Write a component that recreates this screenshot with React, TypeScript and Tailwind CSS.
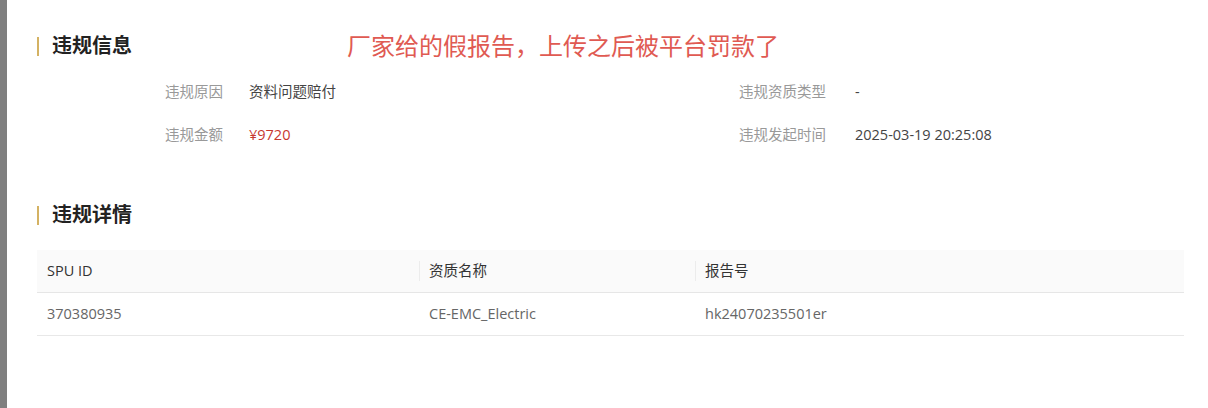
import React from 'react';

const font = "font-['Open_Sans','Noto_Sans_CJK_SC',sans-serif]";

function SectionTitle({ children }: { children: React.ReactNode }) {
    return (
        <div className="flex items-center gap-[13px]">
            <span className="w-[2px] h-[19px] bg-[#d4b263]" />
            <h2 className="text-[20px] leading-[24px] font-bold text-[#222]">{children}</h2>
        </div>
    );
}

export default function App() {
    const rows = [
        { label: '违规原因', value: '资料问题赔付', rLabel: '违规资质类型', rValue: '-' },
        { label: '违规金额', value: '¥9720', red: true, rLabel: '违规发起时间', rValue: '2025-03-19 20:25:08' },
    ];

    return (
        <div className={`flex h-[408px] w-[1208px] overflow-hidden bg-white ${font}`}>
            <div className="w-[7px] shrink-0 bg-[#7f7f7f]" />

            <div className="flex-1 pl-[30px] pt-[34px]">
                {/* 违规信息 */}
                <div className="flex items-center">
                    <SectionTitle>违规信息</SectionTitle>
                    <span className="ml-[215px] text-[24px] leading-[24px] text-[#e05a52]">
                        厂家给的假报告，上传之后被平台罚款了
                    </span>
                </div>

                <div className="mt-[24px] ml-[128px] grid grid-cols-[84px_490px_116px_1fr] gap-y-[23px] text-[14.5px] leading-[20px]">
                    {rows.map((r) => (
                        <React.Fragment key={r.label}>
                            <span className="text-[#999]">{r.label}</span>
                            <span className={r.red ? 'text-[#c7372f]' : 'text-[#444]'}>{r.value}</span>
                            <span className="text-[#999]">{r.rLabel}</span>
                            <span className="text-[#444]">{r.rValue}</span>
                        </React.Fragment>
                    ))}
                </div>

                {/* 违规详情 */}
                <div className="mt-[58px]">
                    <SectionTitle>违规详情</SectionTitle>
                </div>

                <div className="mt-[23px] w-[1147px] text-[14.5px]">
                    <div className="grid h-[43px] grid-cols-[382px_276px_1fr] items-center border-b border-[#e6e6e6] bg-[#fafafa] text-[#333]">
                        <div className="pl-[10px]">SPU ID</div>
                        <div className="relative pl-[10px]">
                            <span className="absolute left-0 top-1/2 h-[20px] w-px -translate-y-1/2 bg-[#ececec]" />
                            资质名称
                        </div>
                        <div className="relative pl-[10px]">
                            <span className="absolute left-0 top-1/2 h-[20px] w-px -translate-y-1/2 bg-[#ececec]" />
                            报告号
                        </div>
                    </div>
                    <div className="grid h-[43px] grid-cols-[382px_276px_1fr] items-center border-b border-[#e8e8e8] text-[#666]">
                        <div className="pl-[10px]">370380935</div>
                        <div className="pl-[10px]">CE-EMC_Electric</div>
                        <div className="pl-[10px]">hk24070235501er</div>
                    </div>
                </div>
            </div>
        </div>
    );
}
